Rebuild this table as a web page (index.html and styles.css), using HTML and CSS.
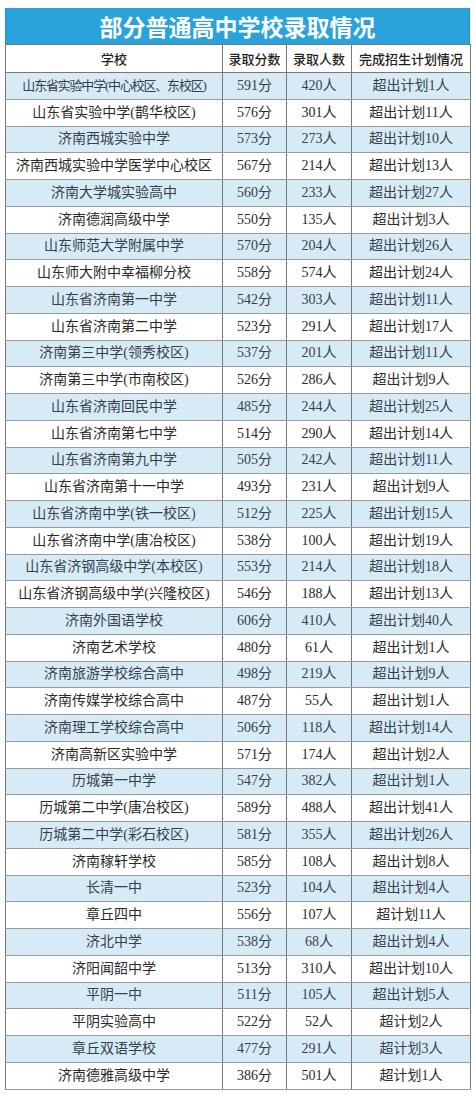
FILE: index.html
```html
<!DOCTYPE html>
<html lang="zh-CN">
<head>
<meta charset="utf-8">
<title>部分普通高中学校录取情况</title>
<link rel="stylesheet" href="styles.css">
</head>
<body>
<div class="sheet">
  <div class="title">部分普通高中学校录取情况</div>
  <table class="grid">
    <colgroup>
      <col class="c-school"><col class="c-score"><col class="c-count"><col class="c-plan">
    </colgroup>
    <thead>
      <tr><th>学校</th><th>录取分数</th><th>录取人数</th><th>完成招生计划情况</th></tr>
    </thead>
    <tbody>
      <tr><td class="tight">山东省实验中学(中心校区、东校区)</td><td>591分</td><td>420人</td><td>超出计划1人</td></tr>
      <tr><td>山东省实验中学(鹊华校区)</td><td>576分</td><td>301人</td><td>超出计划11人</td></tr>
      <tr><td>济南西城实验中学</td><td>573分</td><td>273人</td><td>超出计划10人</td></tr>
      <tr><td>济南西城实验中学医学中心校区</td><td>567分</td><td>214人</td><td>超出计划13人</td></tr>
      <tr><td>济南大学城实验高中</td><td>560分</td><td>233人</td><td>超出计划27人</td></tr>
      <tr><td>济南德润高级中学</td><td>550分</td><td>135人</td><td>超出计划3人</td></tr>
      <tr><td>山东师范大学附属中学</td><td>570分</td><td>204人</td><td>超出计划26人</td></tr>
      <tr><td>山东师大附中幸福柳分校</td><td>558分</td><td>574人</td><td>超出计划24人</td></tr>
      <tr><td>山东省济南第一中学</td><td>542分</td><td>303人</td><td>超出计划11人</td></tr>
      <tr><td>山东省济南第二中学</td><td>523分</td><td>291人</td><td>超出计划17人</td></tr>
      <tr><td>济南第三中学(领秀校区)</td><td>537分</td><td>201人</td><td>超出计划11人</td></tr>
      <tr><td>济南第三中学(市南校区)</td><td>526分</td><td>286人</td><td>超出计划9人</td></tr>
      <tr><td>山东省济南回民中学</td><td>485分</td><td>244人</td><td>超出计划25人</td></tr>
      <tr><td>山东省济南第七中学</td><td>514分</td><td>290人</td><td>超出计划14人</td></tr>
      <tr><td>山东省济南第九中学</td><td>505分</td><td>242人</td><td>超出计划11人</td></tr>
      <tr><td>山东省济南第十一中学</td><td>493分</td><td>231人</td><td>超出计划9人</td></tr>
      <tr><td>山东省济南中学(铁一校区)</td><td>512分</td><td>225人</td><td>超出计划15人</td></tr>
      <tr><td>山东省济南中学(唐冶校区)</td><td>538分</td><td>100人</td><td>超出计划19人</td></tr>
      <tr><td>山东省济钢高级中学(本校区)</td><td>553分</td><td>214人</td><td>超出计划18人</td></tr>
      <tr><td>山东省济钢高级中学(兴隆校区)</td><td>546分</td><td>188人</td><td>超出计划13人</td></tr>
      <tr><td>济南外国语学校</td><td>606分</td><td>410人</td><td>超出计划40人</td></tr>
      <tr><td>济南艺术学校</td><td>480分</td><td>61人</td><td>超出计划1人</td></tr>
      <tr><td>济南旅游学校综合高中</td><td>498分</td><td>219人</td><td>超出计划9人</td></tr>
      <tr><td>济南传媒学校综合高中</td><td>487分</td><td>55人</td><td>超出计划1人</td></tr>
      <tr><td>济南理工学校综合高中</td><td>506分</td><td>118人</td><td>超出计划14人</td></tr>
      <tr><td>济南高新区实验中学</td><td>571分</td><td>174人</td><td>超出计划2人</td></tr>
      <tr><td>历城第一中学</td><td>547分</td><td>382人</td><td>超出计划1人</td></tr>
      <tr><td>历城第二中学(唐冶校区)</td><td>589分</td><td>488人</td><td>超出计划41人</td></tr>
      <tr><td>历城第二中学(彩石校区)</td><td>581分</td><td>355人</td><td>超出计划26人</td></tr>
      <tr><td>济南稼轩学校</td><td>585分</td><td>108人</td><td>超出计划8人</td></tr>
      <tr><td>长清一中</td><td>523分</td><td>104人</td><td>超出计划4人</td></tr>
      <tr><td>章丘四中</td><td>556分</td><td>107人</td><td>超计划11人</td></tr>
      <tr><td>济北中学</td><td>538分</td><td>68人</td><td>超出计划4人</td></tr>
      <tr><td>济阳闻韶中学</td><td>513分</td><td>310人</td><td>超出计划10人</td></tr>
      <tr><td>平阴一中</td><td>511分</td><td>105人</td><td>超出计划5人</td></tr>
      <tr><td>平阴实验高中</td><td>522分</td><td>52人</td><td>超计划2人</td></tr>
      <tr><td>章丘双语学校</td><td>477分</td><td>291人</td><td>超计划3人</td></tr>
      <tr><td>济南德雅高级中学</td><td>386分</td><td>501人</td><td>超计划1人</td></tr>
    </tbody>
  </table>
</div>
</body>
</html>
```
FILE: styles.css
```css
html, body {
  margin: 0;
  padding: 0;
  background: #ffffff;
}

.sheet {
  width: 465px;
  padding: 8px 0 0 5px;
}

.title {
  height: 36px;
  background: #2aa3da;
  color: #ffffff;
  font-family: "Noto Sans CJK SC", "Noto Sans", sans-serif;
  font-weight: 700;
  font-size: 23px;
  line-height: 36px;
  text-align: center;
  border-left: 1px solid #2291c4;
  border-right: 1px solid #2291c4;
  box-sizing: border-box;
}

.grid {
  width: 465px;
  border-collapse: collapse;
  table-layout: fixed;
  border: 1px solid #666666;
}

.c-school { width: 217px; }
.c-score { width: 64px; }
.c-count { width: 65px; }
.c-plan { width: 119px; }

.grid th {
  height: 27px;
  padding: 0;
  font-family: "Noto Sans CJK SC", "Noto Sans", sans-serif;
  font-weight: 500;
  font-size: 13px;
  color: #1e1e1e;
  text-align: center;
  background: #ffffff;
  border: 1px solid #777777;
}

.grid td {
  height: 25.76px;
  padding: 0;
  font-family: "Liberation Serif", "Noto Sans CJK SC", serif;
  font-size: 14px;
  line-height: 16px;
  color: #2a2a2a;
  text-align: center;
  white-space: nowrap;
  border-left: 1px solid #777777;
  border-right: 1px solid #777777;
  border-top: 1px solid #9a9a9a;
  border-bottom: 1px solid #9a9a9a;
}

.grid tbody tr:nth-child(odd) td {
  background: #d7ebf7;
  color: #36404a;
}

.grid td.tight {
  letter-spacing: -1.2px;
  font-size: 13px;
}
```
